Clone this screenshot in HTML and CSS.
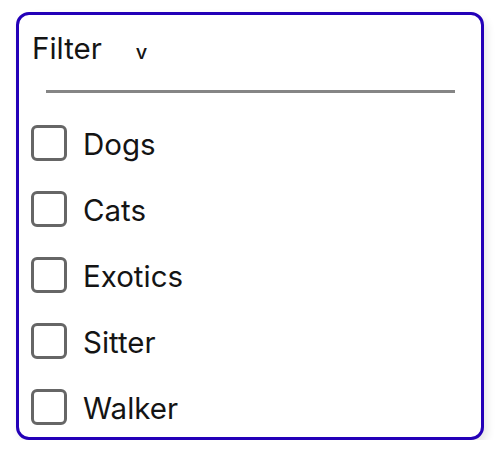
FILE: index.html
```
<!DOCTYPE html>
<html>
<head>
<meta charset="utf-8">
<link rel="stylesheet" href="styles.css">
</head>
<body>
<div class="card">
  <div class="header">
    <span class="title">Filter</span>
    <span class="chevron">v</span>
  </div>
  <div class="rule"></div>
  <ul class="options">
    <li class="option"><span class="box"></span><span class="label">Dogs</span></li>
    <li class="option"><span class="box"></span><span class="label">Cats</span></li>
    <li class="option"><span class="box"></span><span class="label">Exotics</span></li>
    <li class="option"><span class="box"></span><span class="label">Sitter</span></li>
    <li class="option"><span class="box"></span><span class="label">Walker</span></li>
  </ul>
</div>
</body>
</html>
```
FILE: styles.css
```
html, body {
  margin: 0;
  padding: 0;
  background: #ffffff;
}
body {
  font-family: Inter, "Noto Sans", sans-serif;
  color: #141414;
}
.card {
  box-sizing: border-box;
  width: 468px;
  margin: 12px 0 0 16px;
  border: 3px solid #2300b8;
  border-radius: 13px;
  padding: 16px 14px 12px 14px;
  background: #ffffff;
  box-shadow: 3px 5px 9px rgba(0, 0, 0, 0.10);
}
.header {
  display: flex;
  align-items: baseline;
  height: 34px;
  line-height: 34px;
  margin-left: -1px;
}
.title {
  font-size: 29.5px;
}
.chevron {
  font-size: 20px;
  font-weight: 500;
  margin-left: 34px;
}
.rule {
  height: 3px;
  background: #858585;
  margin: 25px 12px 0 13px;
}
.options {
  list-style: none;
  margin: 32px 0 0 0;
  padding: 0;
  display: flex;
  flex-direction: column;
  gap: 30px;
}
.option {
  display: flex;
  align-items: center;
  height: 36px;
  gap: 16px;
}
.box {
  box-sizing: border-box;
  width: 36px;
  height: 36px;
  margin-left: -2px;
  border: 3px solid #666666;
  border-radius: 6px;
  flex: none;
}
.label {
  font-size: 29.5px;
  line-height: 36px;
  padding-top: 2px;
}
```
